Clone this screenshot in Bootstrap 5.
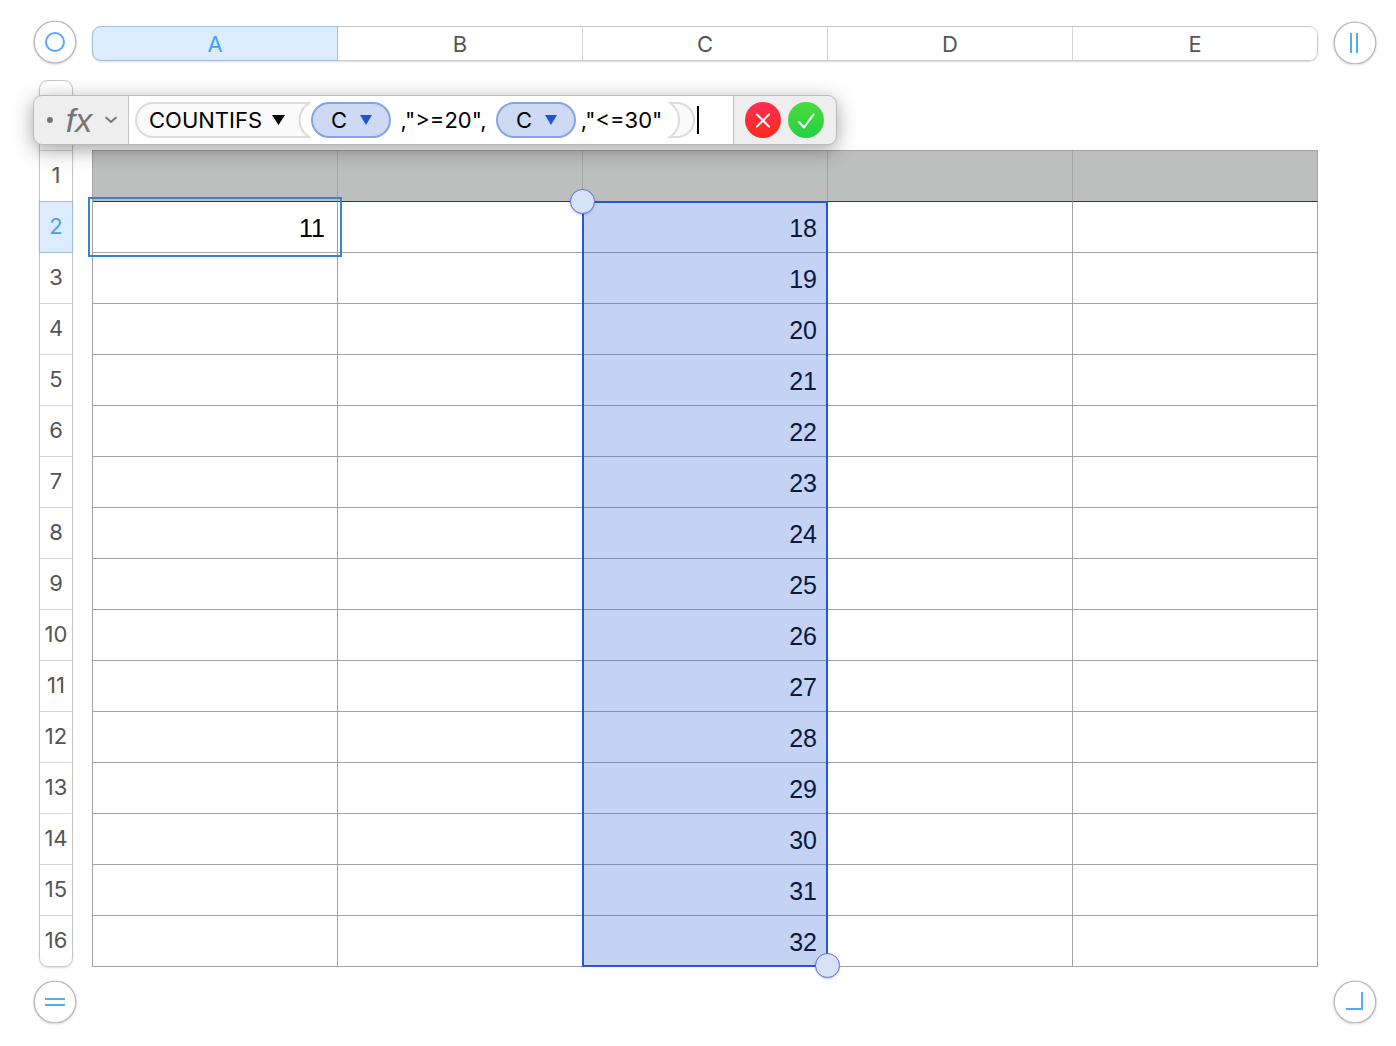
<!DOCTYPE html>
<html lang="en">
<head>
<meta charset="utf-8">
<meta name="viewport" content="width=device-width, initial-scale=1">
<title>Spreadsheet – COUNTIFS</title>
<link rel="stylesheet" href="https://cdn.jsdelivr.net/npm/bootstrap@5.3.0/dist/css/bootstrap.min.css">
<style>
  body { font-family: Inter, Roboto, sans-serif; background: #fff; color: #000; }
  button { font-family: inherit; }
  .sheet { padding: 20px 19px 20px 33px; }
  .line-gap { gap: 15px; }
  .round-handle { width: 44px; height: 44px; padding: 0; border: 0; background: none; flex: none; display: block; }
  .round-handle svg, .verdict svg { display: block; filter: drop-shadow(0 1px 1px rgba(0,0,0,.15)); }

  .col-heads { height: 35px; margin-top: 3px; border: 1px solid #c8c8c8; border-radius: 9px; box-shadow: 0 1px 2px rgba(0,0,0,.14); }
  .head-btn { border: 0; padding: 0; background: #fff; color: #555; font-size: 22px; line-height: 32px; }
  .col-heads .head-btn { flex: 1 1 0; border-right: 1px solid #d4d4d4; }
  .col-heads .head-btn:first-child { border-radius: 8px 0 0 8px; }
  .col-heads .head-btn:last-child { border-right: 0; border-radius: 0 8px 8px 0; }
  .col-heads .head-btn.picked { background: #ddecfd; color: #4a9ff5; margin: -1px 0 -1px -1px; border: 1px solid #a3bddc; border-radius: 9px 0 0 9px; }

  .row-strip { width: 44px; flex: none; }
  .row-heads { width: 34px; border: 1px solid #c8c8c8; border-radius: 9px; box-shadow: 0 1px 2px rgba(0,0,0,.14); margin-left: 6px; }
  .row-heads .head-btn { height: 51px; border-bottom: 1px solid #d4d4d4; background: none; line-height: 48px; padding-bottom: 2px; white-space: nowrap; }
  .row-heads .head-btn:last-child { border-bottom: 0; height: 50px; }
  .row-heads .spacer { height: 70px; border-bottom: 1px solid #d4d4d4; }
  .row-heads .head-btn.picked { background: #ddecfd; color: #4a9ff5; margin: -1px -1px 0; height: 52px; border: 1px solid #a3bddc; }

  .grid-area { margin-top: 70px; }
  .cells { table-layout: fixed; border-collapse: separate; border-spacing: 0; border: solid #a3a3a3; border-width: 1px 0 0 1px; font-family: "Liberation Sans", Arial, sans-serif; font-size: 25px; line-height: 28px; }
  .cells td, .cells th { height: 51px; padding: 1px 10px 0; border: solid #a3a3a3; border-width: 0 1px 1px 0; text-align: right; }
  .cells th { background: #bdbfbe; border-bottom-color: #383838; }
  .cells .editing { position: relative; padding-right: 12px; }
  .editing::after { content: ""; position: absolute; inset: -5px; border: 2px solid #3584d1; }
  .range { position: absolute; top: 51px; bottom: 0; left: 40%; width: 20%; border: 2px solid #2257d6; background: rgba(36,88,214,.27); background-clip: padding-box; pointer-events: none; }
  .range i { position: absolute; width: 25px; height: 25px; border-radius: 50%; background: #d6e2f6; border: 1px solid #5b6ce8; box-shadow: 0 1px 2px rgba(0,0,0,.2); }
  .range i:first-child { left: -14px; top: -14px; }
  .range i:last-child { right: -14px; bottom: -13px; }

  .formula-bar { position: absolute; left: 33px; top: 95px; width: 804px; height: 50px; border: 1px solid #bababa; border-radius: 9px; background: #eee; box-shadow: 0 5px 20px rgba(0,0,0,.36); overflow: hidden; font-size: 22px; line-height: 36px; z-index: 5; }
  .fx-btn { width: 95px; border: 0; border-right: 1px solid #c8c8c8; background: none; color: #757575; padding: 0 11px 0 13px; }
  .fx-btn em { font-size: 34px; line-height: 48px; font-family: "Liberation Sans", Arial, sans-serif; }
  .entry { width: 604px; background: #fff; padding-left: 6px; }
  .fn-name { height: 36px; padding: 0 0 0 12px; gap: 10px; line-height: 32px; border: 2px solid #dcdcdc; border-right: 0; border-radius: 18px 0 0 18px; background: #fafafa; color: #000; width: 163px; }
  .ref-chip { width: 80px; height: 36px; padding: 0 0 0 1px; gap: 13px; border: 2px solid #84a3e5; border-radius: 18px; background: #cedaf3; color: #000; line-height: 32px; }
  .arg-one { width: 105px; }
  .arg-two { width: 91px; }
  .caret { width: 2px; height: 28px; background: #000; margin-left: 2px; }
  .verdicts { border-left: 1px solid #c0c0c0; padding-left: 11px; gap: 7px; flex: 1; }
  .verdict { width: 36px; height: 36px; padding: 0; border: 0; border-radius: 50%; }
  .verdict svg { filter: none; }
  .no { background: linear-gradient(#ff2d55, #f92c1a); }
  .yes { background: linear-gradient(#4cdb3d, #27cf43); }
</style>
<script src="https://cdn.jsdelivr.net/npm/bootstrap@5.3.0/dist/js/bootstrap.bundle.min.js"></script>
</head>
<body>
<main class="sheet position-relative">
  <div class="d-flex line-gap mb-3 align-items-center">
    <button class="round-handle" aria-label="Select table"><svg width="44" height="44" fill="#fff"><circle cx="22" cy="22" r="20.8" stroke="#b9b9b9" stroke-width="1.3"/><circle cx="22" cy="22" r="9" stroke="#53aaf7" stroke-width="2"/></svg></button>
    <div class="col-heads d-flex flex-fill">
      <button class="head-btn picked">A</button><button class="head-btn">B</button><button class="head-btn">C</button><button class="head-btn">D</button><button class="head-btn">E</button>
    </div>
    <button class="round-handle" aria-label="Add column"><svg width="44" height="44"><circle cx="22" cy="23" r="20.8" fill="#fff" stroke="#b9b9b9" stroke-width="1.3"/><path d="M18 13v20M24 13v20" stroke="#53aaf7" stroke-width="2"/></svg></button>
  </div>

  <div class="d-flex line-gap">
    <div class="row-strip">
      <div class="row-heads d-flex flex-column">
        <div class="spacer"></div>
        <button class="head-btn">1</button><button class="head-btn picked">2</button><button class="head-btn">3</button><button class="head-btn">4</button>
        <button class="head-btn">5</button><button class="head-btn">6</button><button class="head-btn">7</button><button class="head-btn">8</button>
        <button class="head-btn">9</button><button class="head-btn">10</button><button class="head-btn">11</button><button class="head-btn">12</button>
        <button class="head-btn">13</button><button class="head-btn">14</button><button class="head-btn">15</button><button class="head-btn">16</button>
      </div>
    </div>
    <div class="grid-area position-relative flex-fill">
      <table class="cells w-100">
        <thead><tr><th></th><th></th><th></th><th></th><th></th></tr></thead>
        <tbody>
          <tr><td class="editing">11</td><td></td><td>18</td><td></td><td></td></tr>
          <tr><td></td><td></td><td>19</td><td></td><td></td></tr>
          <tr><td></td><td></td><td>20</td><td></td><td></td></tr>
          <tr><td></td><td></td><td>21</td><td></td><td></td></tr>
          <tr><td></td><td></td><td>22</td><td></td><td></td></tr>
          <tr><td></td><td></td><td>23</td><td></td><td></td></tr>
          <tr><td></td><td></td><td>24</td><td></td><td></td></tr>
          <tr><td></td><td></td><td>25</td><td></td><td></td></tr>
          <tr><td></td><td></td><td>26</td><td></td><td></td></tr>
          <tr><td></td><td></td><td>27</td><td></td><td></td></tr>
          <tr><td></td><td></td><td>28</td><td></td><td></td></tr>
          <tr><td></td><td></td><td>29</td><td></td><td></td></tr>
          <tr><td></td><td></td><td>30</td><td></td><td></td></tr>
          <tr><td></td><td></td><td>31</td><td></td><td></td></tr>
          <tr><td></td><td></td><td>32</td><td></td><td></td></tr>
        </tbody>
      </table>
      <div class="range"><i></i><i></i></div>
    </div>
    <div class="row-strip"></div>
  </div>

  <div class="d-flex justify-content-between pt-2 mt-1">
    <button class="round-handle" aria-label="Add row"><svg width="44" height="44"><circle cx="22" cy="23" r="20.8" fill="#fff" stroke="#b9b9b9" stroke-width="1.3"/><path d="M12 20h20M12 26h20" stroke="#53aaf7" stroke-width="2"/></svg></button>
    <button class="round-handle" aria-label="Resize table"><svg width="44" height="44"><circle cx="22" cy="23" r="20.8" fill="#fff" stroke="#b9b9b9" stroke-width="1.3"/><path d="M13 30h16V13" fill="none" stroke="#53aaf7" stroke-width="2"/></svg></button>
  </div>

  <div class="formula-bar d-flex">
    <button class="fx-btn d-flex align-items-center justify-content-between" aria-label="Formula options">
      <svg width="6" height="6"><circle cx="3" cy="3" r="3" fill="#757575"/></svg>
      <em>fx</em>
      <svg width="12" height="8" fill="none" stroke="#757575" stroke-width="1.8" stroke-linecap="round" stroke-linejoin="round"><path d="M1 1.500l5 4.500 5-4.500"/></svg>
    </button>
    <div class="entry d-flex align-items-center" role="textbox" aria-label="Formula">
      <button class="fn-name d-flex align-items-center">COUNTIFS <svg width="13" height="10"><path d="M0 0h13L6.500 10z"/></svg></button>
      <svg width="13" height="36"><path d="M0 1H12C5 4 1.500 11 1.500 18S5 32 12 35H0" fill="#fafafa" stroke="#dcdcdc" stroke-width="2"/></svg>
      <button class="ref-chip d-flex align-items-center justify-content-center">C <svg width="12" height="10"><path d="M0 0h12L6 10z" fill="#1f56cf"/></svg></button>
      <span class="arg-one text-center">,"&gt;=20",</span>
      <button class="ref-chip d-flex align-items-center justify-content-center">C <svg width="12" height="10"><path d="M0 0h12L6 10z" fill="#1f56cf"/></svg></button>
      <span class="arg-two text-center">,"&lt;=30"</span>
      <svg width="28" height="36"><path d="M3 1H10A17 17 0 0 1 10 35H3C9 31 12 25 12 18S9 5 3 1Z" fill="#fafafa" stroke="#dcdcdc" stroke-width="2"/></svg>
      <span class="caret"></span>
    </div>
    <div class="verdicts d-flex align-items-center">
      <button class="verdict no" aria-label="Cancel"><svg width="36" height="36" stroke="#fff" stroke-width="2" stroke-linecap="round"><path d="M12 12.500l12 12M24 12.500l-12 12"/></svg></button>
      <button class="verdict yes" aria-label="Accept"><svg width="36" height="36" fill="none" stroke="#fff" stroke-width="2" stroke-linecap="round" stroke-linejoin="round"><path d="M11 20l5 5.500 9.500-13"/></svg></button>
    </div>
  </div>
</main>
</body>
</html>
